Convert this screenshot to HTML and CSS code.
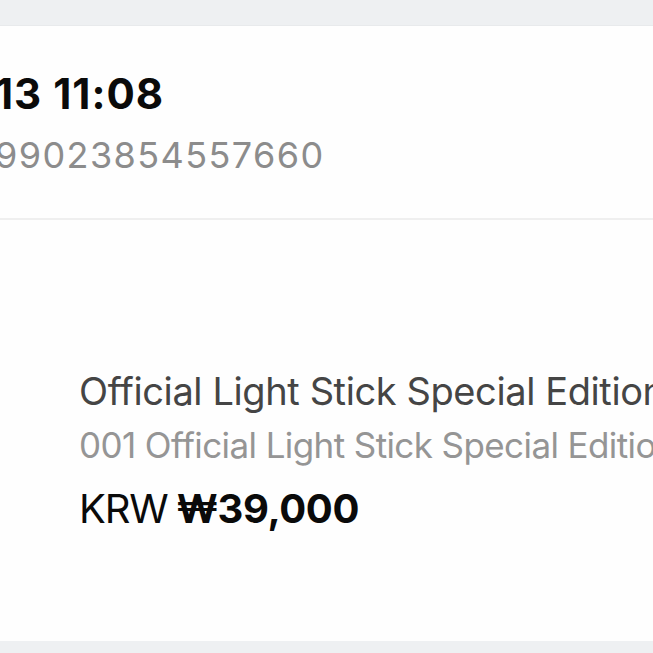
FILE: index.html
```html
<!DOCTYPE html>
<html lang="en">
<head>
<meta charset="utf-8">
<link rel="stylesheet" href="styles.css">
</head>
<body>
<div class="page">
  <div class="card">
    <section class="order">
      <div class="order-date">13 11:08</div>
      <div class="order-no">99023854557660</div>
    </section>
    <section class="product">
      <div class="product-info">
        <div class="product-name">Official Light Stick Special Edition</div>
        <div class="product-option">001 Official Light Stick Special Edition</div>
        <div class="product-price"><span class="currency">KRW</span><span class="amount">₩39,000</span></div>
      </div>
    </section>
  </div>
</div>
</body>
</html>
```
FILE: styles.css
```css
html, body {
  margin: 0;
  padding: 0;
}
body {
  background: #eef0f2;
  font-family: Inter, "Noto Sans", sans-serif;
  width: 653px;
  height: 653px;
  overflow: hidden;
}
.page {
  padding-top: 25px;
}
.card {
  background: #fefefe;
  height: 616px;
  border-top: 1px solid #e8eaec;
  box-sizing: border-box;
  overflow: hidden;
}
.order {
  padding: 43px 0 41px 0;
  border-bottom: 2px solid #efefef;
  margin-left: -5px;
}
.order-date {
  font-size: 42px;
  line-height: 50px;
  font-weight: 700;
  letter-spacing: 1px;
  color: #0a0a0a;
  white-space: nowrap;
}
.order-no {
  margin-top: 15px;
  font-size: 36px;
  line-height: 43px;
  letter-spacing: 1.4px;
  color: #8c8c8c;
  white-space: nowrap;
}
.product {
  padding: 148px 0 0 79px;
}
.product-info {
  white-space: nowrap;
}
.product-name {
  font-size: 38px;
  line-height: 46px;
  letter-spacing: -0.4px;
  color: #454545;
}
.product-option {
  margin-top: 10px;
  font-size: 35px;
  line-height: 43px;
  letter-spacing: -0.6px;
  color: #959595;
}
.product-price {
  margin-top: 18px;
  font-size: 40px;
  line-height: 48px;
  color: #0a0a0a;
  display: flex;
  gap: 9px;
}
.currency {
  font-weight: 400;
  letter-spacing: -1.2px;
}
.amount {
  font-weight: 700;
  letter-spacing: -0.4px;
}
```
